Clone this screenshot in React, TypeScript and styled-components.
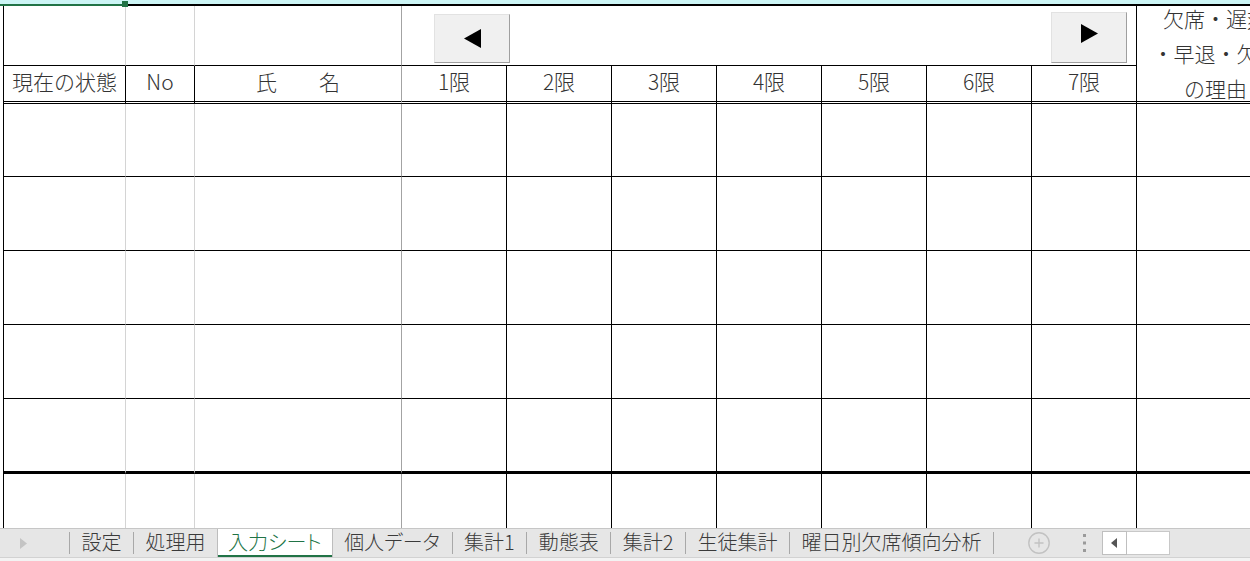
import styled, { createGlobalStyle, css } from 'styled-components';

const GlobalStyle = createGlobalStyle`
  html, body {
    margin: 0;
    padding: 0;
    background: #fff;
  }
  body {
    font-family: "Noto Sans CJK JP", "Noto Sans", sans-serif;
    overflow: hidden;
  }
`;

const Page = styled.div`
  width: 1250px;
  height: 561px;
  display: flex;
  flex-direction: column;
  overflow: hidden;
`;

const TopStrip = styled.div`
  display: flex;
  height: 6px;
  flex-shrink: 0;
  background: #ccf5f5;
`;

const SelectedEdge = styled.div`
  position: relative;
  width: 124px;
  box-sizing: border-box;
  border-bottom: 2px solid #217346;
`;

const FillHandle = styled.div`
  position: absolute;
  left: 122px;
  top: 1px;
  width: 6px;
  height: 6px;
  background: #217346;
`;

const TopRule = styled.div`
  flex: 1;
  box-sizing: border-box;
  border-bottom: 2px solid #000;
`;

const Sheet = styled.div`
  flex: 1;
  padding-left: 3px;
  overflow: hidden;
`;

const Grid = styled.div`
  display: grid;
  grid-template-columns: 122px 69px 207px repeat(7, 105px) 158px;
  grid-template-rows: 60px 38px 73px 74px 74px 74px 75px 1fr;
  width: max-content;
  height: 100%;
  border-left: 1px solid #000;
`;

type Edge = 'light' | 'mid' | 'dark' | 'none';
type Floor = 'thin' | 'double' | 'thick' | 'none';

const edgeColor: Record<Edge, string> = {
  light: '#d4d4d4',
  mid: '#a3a3a3',
  dark: '#000',
  none: 'transparent',
};

const floorStyle: Record<Floor, string> = {
  thin: 'border-bottom: 1px solid #000;',
  double: 'border-bottom: 3px double #000;',
  thick: 'border-bottom: 3px solid #000;',
  none: '',
};

const Cell = styled.div<{ $edge: Edge; $floor: Floor }>`
  box-sizing: border-box;
  min-width: 0;
  border-right: 1px solid ${(p) => edgeColor[p.$edge]};
  ${(p) => floorStyle[p.$floor]}
`;

const HeadCell = styled(Cell)`
  display: flex;
  align-items: center;
  justify-content: center;
  padding-bottom: 5px;
  font-size: 21px;
  font-weight: 300;
  color: #333;
  white-space: pre;
`;

const ButtonCell = styled(Cell)`
  grid-column: span 7;
  display: flex;
  justify-content: space-between;
  align-items: flex-end;
  padding: 0 9px 2px 32px;
`;

const NavButton = styled.div<{ $tall?: boolean }>`
  box-sizing: border-box;
  width: 76px;
  height: ${(p) => (p.$tall ? 51 : 49)}px;
  padding-bottom: ${(p) => (p.$tall ? 8 : 0)}px;
  display: flex;
  align-items: center;
  justify-content: center;
  background: #f0f0f0;
  border: 1px solid;
  border-color: #e2e2e2 #9f9f9f #9f9f9f #e2e2e2;
`;

const ReasonCell = styled(Cell)`
  grid-row: span 2;
  display: flex;
  flex-direction: column;
  align-items: center;
  justify-content: center;
  padding-bottom: 0;
  font-size: 21px;
  font-weight: 300;
  line-height: 35px;
  color: #333;
  white-space: nowrap;
`;

const TabBar = styled.div`
  flex-shrink: 0;
  height: 33px;
  box-sizing: border-box;
  border-top: 1px solid #c6c6c6;
  background: #e6e6e6;
  display: flex;
  flex-direction: column;
`;

const TabRow = styled.div`
  display: flex;
  align-items: center;
  height: 28px;
`;

const TabFoot = styled.div`
  flex: 1;
  border-top: 1px solid #d2d2d2;
  background: #f3f3f3;
`;

const NavArea = styled.div`
  width: 69px;
  height: 100%;
  display: flex;
  align-items: center;
  padding-left: 20px;
  box-sizing: border-box;
`;

const Sep = styled.div`
  width: 1px;
  height: 22px;
  background: #a8a8a8;
  flex-shrink: 0;
`;

const Tab = styled.div<{ $active?: boolean }>`
  height: 100%;
  box-sizing: border-box;
  display: flex;
  align-items: center;
  padding: 0 11.5px 4px;
  font-size: 20px;
  font-weight: 300;
  color: #3a3a3a;
  white-space: nowrap;
  font-feature-settings: "palt";
  ${(p) =>
    p.$active &&
    css`
      background: #fff;
      color: #217346;
      padding: 0 10px 4px;
      border-left: 1px solid #bdbdbd;
      border-right: 1px solid #bdbdbd;
      box-shadow: inset 0 -2px 0 #217346;
    `}
`;

const AddSheet = styled.div`
  margin-left: 34px;
  display: flex;
`;

const MoreDots = styled.div`
  margin-left: 32px;
  display: flex;
`;

const HScroll = styled.div`
  margin-left: 15px;
  display: flex;
  height: 24px;
`;

const ScrollStep = styled.div`
  width: 25px;
  box-sizing: border-box;
  background: #fff;
  border: 1px solid #bfbfbf;
  display: flex;
  align-items: center;
  justify-content: center;
`;

const ScrollThumb = styled.div`
  width: 43px;
  box-sizing: border-box;
  background: #fff;
  border: 1px solid #c8c8c8;
  border-left: none;
`;

const Triangle = ({ dir, w, h, color }: { dir: 'left' | 'right'; w: number; h: number; color: string }) => (
  <svg width={w} height={h} viewBox={`0 0 ${w} ${h}`}>
    <polygon
      points={dir === 'left' ? `${w},0 ${w},${h} 0,${h / 2}` : `0,0 0,${h} ${w},${h / 2}`}
      fill={color}
    />
  </svg>
);

const periods = ['1限', '2限', '3限', '4限', '5限', '6限', '7限'];
const tabs = ['設定', '処理用', '入力シート', '個人データ', '集計1', '動態表', '集計2', '生徒集計', '曜日別欠席傾向分析'];
const activeTab = 2;
const bodyFloors: Floor[] = ['thin', 'thin', 'thin', 'thin', 'thick', 'none'];

const BodyRow = ({ floor }: { floor: Floor }) => (
  <>
    <Cell $edge="light" $floor={floor} />
    <Cell $edge="light" $floor={floor} />
    <Cell $edge="mid" $floor={floor} />
    {periods.map((p) => (
      <Cell key={p} $edge="dark" $floor={floor} />
    ))}
    <Cell $edge="none" $floor={floor} />
  </>
);

export default function App() {
  return (
    <Page>
      <GlobalStyle />
      <TopStrip>
        <SelectedEdge>
          <FillHandle />
        </SelectedEdge>
        <TopRule />
      </TopStrip>

      <Sheet>
        <Grid>
          <Cell $edge="light" $floor="thin" />
          <Cell $edge="light" $floor="thin" />
          <Cell $edge="mid" $floor="thin" />
          <ButtonCell $edge="dark" $floor="thin">
            <NavButton>
              <Triangle dir="left" w={17} h={19} color="#000" />
            </NavButton>
            <NavButton $tall>
              <Triangle dir="right" w={17} h={19} color="#000" />
            </NavButton>
          </ButtonCell>
          <ReasonCell $edge="none" $floor="double">
            <span>欠席・遅刻</span>
            <span>・早退・欠課</span>
            <span>の理由</span>
          </ReasonCell>

          <HeadCell $edge="dark" $floor="double">現在の状態</HeadCell>
          <HeadCell $edge="dark" $floor="double">No</HeadCell>
          <HeadCell $edge="mid" $floor="double">氏　　名</HeadCell>
          {periods.map((p) => (
            <HeadCell key={p} $edge="dark" $floor="double">
              {p}
            </HeadCell>
          ))}

          {bodyFloors.map((f, i) => (
            <BodyRow key={i} floor={f} />
          ))}
        </Grid>
      </Sheet>

      <TabBar>
        <TabRow>
          <NavArea>
            <Triangle dir="right" w={7} h={11} color="#c4c4c4" />
          </NavArea>
          <Sep />
          {tabs.map((t, i) => (
            <>
              <Tab key={t} $active={i === activeTab}>
                {t}
              </Tab>
              {i !== activeTab && i + 1 !== activeTab && <Sep key={t + '-sep'} />}
            </>
          ))}
          <AddSheet>
            <svg width="22" height="22" viewBox="0 0 22 22">
              <circle cx="11" cy="11" r="10.2" fill="none" stroke="#c2c2c2" strokeWidth="1.4" />
              <path d="M11 6.5v9M6.5 11h9" stroke="#c2c2c2" strokeWidth="1.4" />
            </svg>
          </AddSheet>
          <MoreDots>
            <svg width="5" height="18" viewBox="0 0 5 18">
              <rect x="1" y="0" width="3" height="3" fill="#9a9a9a" />
              <rect x="1" y="7.5" width="3" height="3" fill="#9a9a9a" />
              <rect x="1" y="15" width="3" height="3" fill="#9a9a9a" />
            </svg>
          </MoreDots>
          <HScroll>
            <ScrollStep>
              <Triangle dir="left" w={6} h={10} color="#555" />
            </ScrollStep>
            <ScrollThumb />
          </HScroll>
        </TabRow>
        <TabFoot />
      </TabBar>
    </Page>
  );
}
